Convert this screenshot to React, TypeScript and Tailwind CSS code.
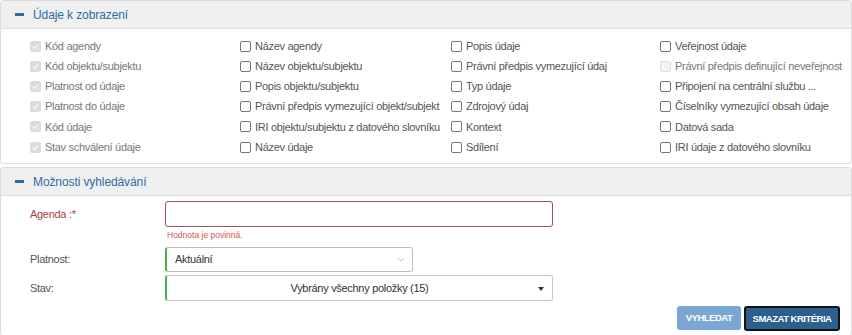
import React from "react";

const col1 = [
  "Kód agendy",
  "Kód objektu/subjektu",
  "Platnost od údaje",
  "Platnost do údaje",
  "Kód údaje",
  "Stav schválení údaje",
];
const col2 = [
  "Název agendy",
  "Název objektu/subjektu",
  "Popis objektu/subjektu",
  "Právní předpis vymezující objekt/subjekt",
  "IRI objektu/subjektu z datového slovníku",
  "Název údaje",
];
const col3 = [
  "Popis údaje",
  "Právní předpis vymezující údaj",
  "Typ údaje",
  "Zdrojový údaj",
  "Kontext",
  "Sdílení",
];
const col4 = [
  "Veřejnost údaje",
  "Právní předpis definující neveřejnost",
  "Připojení na centrální službu ...",
  "Číselníky vymezující obsah údaje",
  "Datová sada",
  "IRI údaje z datového slovníku",
];

type BoxState = "checkedDisabled" | "empty" | "disabled";

const Box = ({ state }: { state: BoxState }) => {
  if (state === "checkedDisabled") {
    return (
      <span className="flex h-[11px] w-[11px] shrink-0 items-center justify-center rounded-[2px] bg-[#dcdcdc]">
        <svg viewBox="0 0 10 10" className="h-[9px] w-[9px]">
          <path d="M2 5.2 L4.1 7.2 L8 2.8" fill="none" stroke="#f7f7f7" strokeWidth="1.6" />
        </svg>
      </span>
    );
  }
  if (state === "disabled") {
    return <span className="h-[11px] w-[11px] shrink-0 rounded-[2px] border border-[#dedede] bg-[#f3f3f3]" />;
  }
  return <span className="h-[11px] w-[11px] shrink-0 rounded-[2px] border border-[#767676] bg-white" />;
};

const Check = ({ label, state = "empty" }: { label: string; state?: BoxState }) => (
  <div className="flex h-[20.2px] items-center gap-[4px] whitespace-nowrap">
    <Box state={state} />
    <span className={state === "empty" ? "text-[#555]" : "text-[#777]"}>{label}</span>
  </div>
);

const PanelHeader = ({ title }: { title: string }) => (
  <div className="flex h-[28px] items-center gap-[9px] border-b border-[#dddddd] bg-[#f0f0f0] pl-[14px] text-[12px] tracking-[-0.1px] text-[#2e6da4]">
    <span className="h-[3px] w-[9px] bg-[#2e6da4]" />
    <span>{title}</span>
  </div>
);

const App = () => {
  return (
    <div className="h-[335px] w-[852px] bg-white font-['Liberation_Sans',Arial,sans-serif] text-[11px] tracking-[-0.3px]">
      <div className="overflow-hidden rounded-[3px] border border-[#dddddd]">
        <PanelHeader title="Údaje k zobrazení" />
        <div className="grid grid-cols-[210px_211px_209px_1fr] pb-[6px] pl-[29px] pt-[7px]">
          <div>
            {col1.map((l) => (
              <Check key={l} label={l} state="checkedDisabled" />
            ))}
          </div>
          <div>
            {col2.map((l) => (
              <Check key={l} label={l} />
            ))}
          </div>
          <div>
            {col3.map((l) => (
              <Check key={l} label={l} />
            ))}
          </div>
          <div>
            {col4.map((l, i) => (
              <Check key={l} label={l} state={i === 1 ? "disabled" : "empty"} />
            ))}
          </div>
        </div>
      </div>

      <div className="mt-[3px] overflow-hidden rounded-[3px] border border-[#dddddd]">
        <PanelHeader title="Možnosti vyhledávání" />
        <div className="pb-[4px] pl-[29px] pt-[5px]">
          <div className="grid grid-cols-[135px_388px] items-start">
            <div className="flex h-[26px] items-center text-[#a94442]">Agenda :*</div>
            <div>
              <div className="h-[26px] rounded-[3px] border border-[#a05050] bg-white" />
              <div className="mt-[1px] pl-[2px] text-[8.5px] leading-[14px] tracking-normal text-[#d9534f]">Hodnota je povinná.</div>
            </div>
          </div>

          <div className="mt-[5px] grid grid-cols-[135px_248px] items-center">
            <div className="text-[#555]">Platnost:</div>
            <div className="flex h-[25px] items-center justify-between rounded-[3px] border border-[#bdbdbd] border-l-2 border-l-[#4cae4c] pl-[8px] pr-[7px] text-[#333]">
              <span>Aktuální</span>
              <svg viewBox="0 0 10 6" className="h-[5px] w-[8px]">
                <path d="M1 1 L5 5 L9 1" fill="none" stroke="#a8a8a8" strokeWidth="1" />
              </svg>
            </div>
          </div>

          <div className="mt-[3px] grid grid-cols-[135px_388px] items-start">
            <div className="pt-[5px] text-[#555]">Stav:</div>
            <div className="relative flex h-[26px] items-center justify-center rounded-[3px] border border-[#c8c8c8] border-l-2 border-l-[#4cae4c] text-[#333]">
              <span>Vybrány všechny položky (15)</span>
              <span className="absolute right-[8px] top-[11px] h-0 w-0 border-l-[3.5px] border-r-[3.5px] border-t-[4px] border-l-transparent border-r-transparent border-t-[#333]" />
            </div>
          </div>

          <div className="mt-[5px] flex justify-end gap-[3px] pr-[11px]">
            <button className="h-[24px] w-[64px] rounded-[3px] bg-[#7ba8d3] text-[9.5px] font-bold tracking-[-0.5px] text-white">
              VYHLEDAT
            </button>
            <button className="h-[25px] w-[96px] rounded-[3px] border-2 border-[#111] bg-[#2b5f8e] text-[9.5px] font-bold tracking-[-0.5px] text-white">
              SMAZAT KRITÉRIA
            </button>
          </div>
        </div>
      </div>
    </div>
  );
};

export default App;
